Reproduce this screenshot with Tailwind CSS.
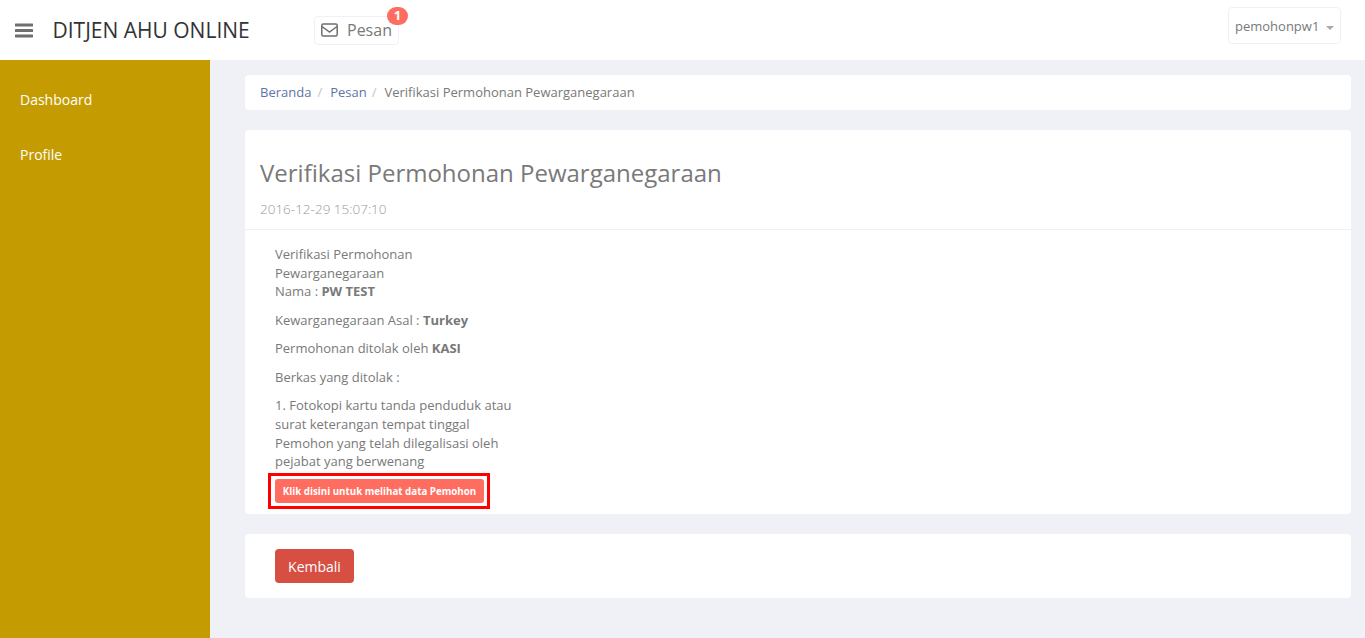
<!DOCTYPE html>
<html lang="id">
<head>
  <meta charset="UTF-8" />
  <title>DITJEN AHU ONLINE</title>
  <script src="https://cdn.jsdelivr.net/npm/@tailwindcss/browser@4"></script>
</head>
<body class="bg-[#f0f1f6] font-['Open_Sans',sans-serif] text-[13px] text-[#797979] overflow-hidden">
  <div class="h-[638px] flex flex-col">
    <!-- header -->
    <header class="h-[60px] shrink-0 bg-white flex items-center pl-[15px] pr-[24px]">
      <svg class="w-[18px] h-[15px] text-[#6f6f6f]" viewBox="0 0 18 15" fill="currentColor">
        <rect y="0.5" width="18" height="3" rx="0.5" />
        <rect y="6" width="18" height="3" rx="0.5" />
        <rect y="11.5" width="18" height="3" rx="0.5" />
      </svg>
      <div class="ml-[19.5px] text-[21px] text-[#333] w-[261.5px] leading-none">DITJEN AHU ONLINE</div>
      <div class="relative h-[29px] w-[85px] border border-[#eff1f6] rounded-[4px] flex items-center pl-[6px] gap-[9px]">
        <svg class="w-[17px] h-[14px] text-[#6f6f6f]" viewBox="0 0 17 14" fill="none" stroke="currentColor" stroke-width="1.5">
          <rect x="0.8" y="1" width="15.4" height="12" rx="1.5" />
          <path d="M1 3.5l7.5 5.5 7.5-5.5" />
        </svg>
        <span class="text-[16px] text-[#797979] leading-none">Pesan</span>
        <span class="absolute -top-[10px] right-[-10px] w-[21px] h-[18px] rounded-full bg-[#ff6c60] text-white text-[13px] font-bold flex items-center justify-center leading-none">1</span>
      </div>
      <div class="ml-auto mb-[9px] h-[37px] w-[113px] border border-[#eff1f6] rounded-[4px] flex items-center pl-[6px] gap-[7px]">
        <span class="text-[#797979] mt-[2px]">pemohonpw1</span>
        <span class="w-0 h-0 border-x-[4px] border-x-transparent border-t-[4px] border-t-[#aaa] mt-[4px]"></span>
      </div>
    </header>

    <div class="flex flex-1 min-h-0">
      <!-- sidebar -->
      <aside class="w-[210px] shrink-0 bg-[#c49c02] text-white text-[14px] pl-[20px] pt-[30px]">
        <a class="block h-[20px] leading-[20px]">Dashboard</a>
        <a class="block h-[20px] leading-[20px] mt-[35px]">Profile</a>
      </aside>

      <!-- content -->
      <main class="flex-1 pl-[35px] pr-[14px] pt-[15px]">
        <nav class="h-[35px] bg-white rounded-[4px] flex items-center px-[15px]">
          <a class="text-[#5e74a8]">Beranda</a>
          <span class="text-[#c4c4c4] ml-[6px] mr-[8px]">/</span>
          <a class="text-[#5e74a8]">Pesan</a>
          <span class="text-[#c4c4c4] ml-[5px] mr-[8px]">/</span>
          <span>Verifikasi Permohonan Pewarganegaraan</span>
        </nav>

        <section class="mt-[20px] h-[384px] bg-white rounded-[4px]">
          <div class="h-[100px] border-b border-[#eff1f6] pl-[15px] pt-[26px]">
            <h1 class="text-[24px] leading-[33px] text-[#797979]">Verifikasi Permohonan Pewarganegaraan</h1>
            <p class="mt-[10px] text-[13.5px] font-light leading-[20px] text-[#999]">2016-12-29 15:07:10</p>
          </div>
          <div class="pl-[30px] pt-[15px] leading-[18.57px]">
            <p class="w-[240px]">Verifikasi Permohonan Pewarganegaraan<br />Nama : <b>PW TEST</b></p>
            <p class="mt-[10px]">Kewarganegaraan Asal : <b>Turkey</b></p>
            <p class="mt-[10px]">Permohonan ditolak oleh <b>KASI</b></p>
            <p class="mt-[10px]">Berkas yang ditolak :</p>
            <p class="mt-[10px] w-[240px]">1. Fotokopi kartu tanda penduduk atau surat keterangan tempat tinggal Pemohon yang telah dilegalisasi oleh pejabat yang berwenang</p>
            <div class="relative mt-[8px] w-[209px] h-[24px] bg-[#ff6c60] rounded-[3px] text-white text-[9.75px] font-bold flex items-center justify-center pt-[4px]">
              Klik disini untuk melihat data Pemohon
              <span class="absolute -left-[7px] -right-[6px] -inset-y-[6px] border-[3px] border-[#ff0000]"></span>
            </div>
          </div>
        </section>

        <section class="mt-[20px] h-[64px] bg-white rounded-[4px] flex items-center pl-[30px]">
          <button class="h-[34px] w-[79px] bg-[#d64f42] rounded-[4px] text-white text-[14px]">Kembali</button>
        </section>
      </main>
    </div>
  </div>
</body>
</html>
